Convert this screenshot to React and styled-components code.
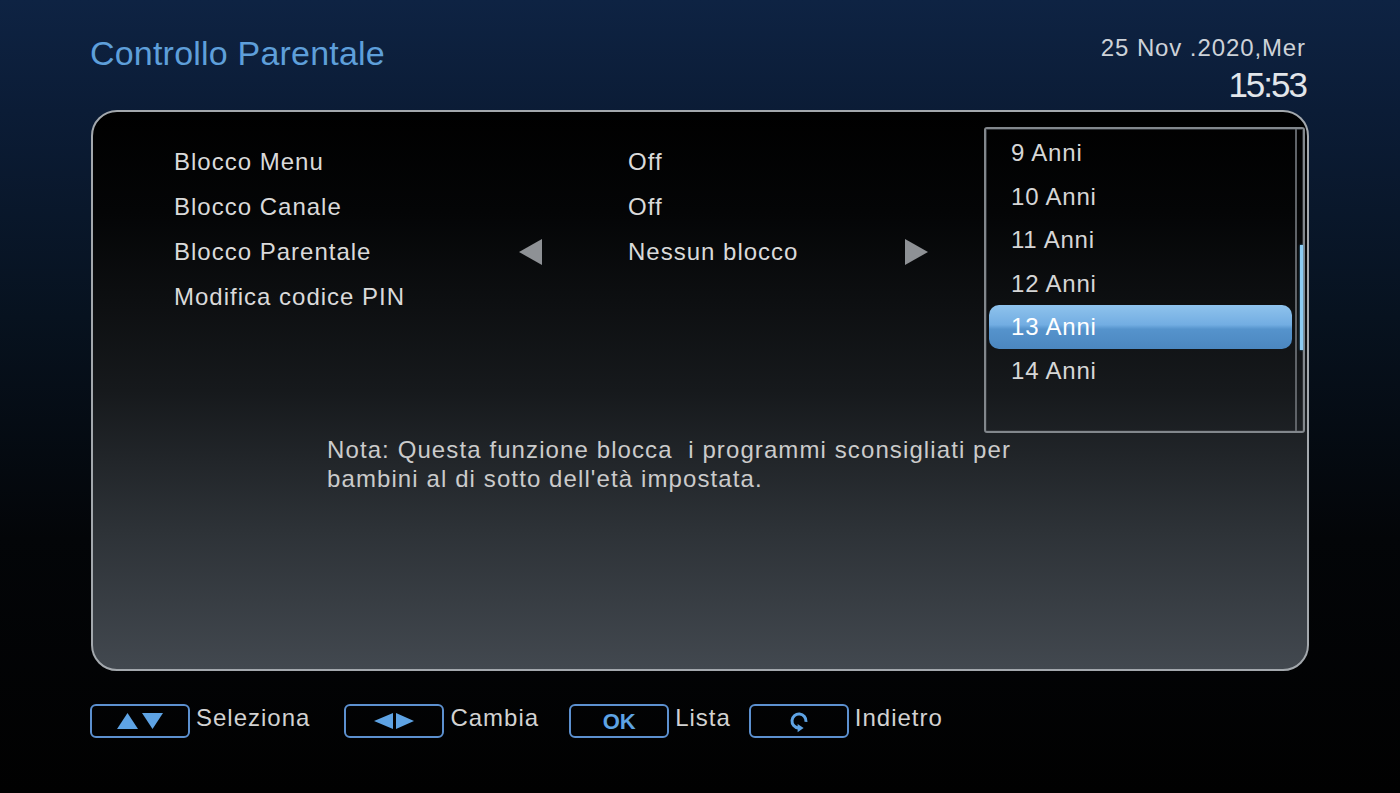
import React from "react";
import styled, { createGlobalStyle } from "styled-components";

const GlobalStyle = createGlobalStyle`
  html, body {
    margin: 0;
    padding: 0;
    background: #000;
  }
  body {
    font-family: "Liberation Sans", Arial, sans-serif;
  }
`;

const settings = [
  { label: "Blocco Menu", value: "Off" },
  { label: "Blocco Canale", value: "Off" },
  { label: "Blocco Parentale", value: "Nessun blocco", arrows: true },
  { label: "Modifica codice PIN", value: "" },
];

const ages = [9, 10, 11, 12, 13, 14];
const selectedAge = 13;

const UpDownIcon = () => (
  <svg width="48" height="18" viewBox="0 0 48 18">
    <polygon points="1,17 11.5,1 22,17" fill="#5ea3e4" />
    <polygon points="26,1 47,1 36.5,17" fill="#5ea3e4" />
  </svg>
);

const LeftRightIcon = () => (
  <svg width="42" height="18" viewBox="0 0 42 18">
    <polygon points="20,1 20,17 1,9" fill="#5ea3e4" />
    <polygon points="23,1 23,17 41,9" fill="#5ea3e4" />
  </svg>
);

const BackIcon = () => (
  <BackSvg width="24" height="26" viewBox="0 0 24 26">
    <circle
      cx="12"
      cy="12"
      r="7"
      fill="none"
      stroke="#5ea3e4"
      strokeWidth="3"
      strokeDasharray="33 11"
      transform="rotate(95 12 12)"
    />
    <polygon points="10.6,15 10.6,23.2 16.6,19" fill="#5ea3e4" />
  </BackSvg>
);

const OkText = ({ children }) => <OkLabel>{children}</OkLabel>;

const hints = [
  { key: "sel", icon: <UpDownIcon />, label: "Seleziona", space: 34 },
  { key: "chg", icon: <LeftRightIcon />, label: "Cambia", space: 30 },
  { key: "ok", icon: <OkText>OK</OkText>, label: "Lista", space: 18 },
  { key: "back", icon: <BackIcon />, label: "Indietro", space: 0 },
];

const App = () => {
  return (
    <>
      <GlobalStyle />
      <Screen>
        <Header>
          <Title>Controllo Parentale</Title>
          <Clock>
            <DateLine>25 Nov .2020,Mer</DateLine>
            <TimeLine>15:53</TimeLine>
          </Clock>
        </Header>

        <Panel>
          <Settings>
            {settings.map((s) => (
              <Row key={s.label}>
                <Label>{s.label}</Label>
                <ArrowCell>{s.arrows && <Arrow dir="left" />}</ArrowCell>
                <Value>{s.value}</Value>
                <ArrowCell>{s.arrows && <Arrow dir="right" />}</ArrowCell>
              </Row>
            ))}
          </Settings>

          <ListBox>
            <Items>
              {ages.map((a) => (
                <Item key={a} $active={a === selectedAge}>
                  {a} Anni
                </Item>
              ))}
            </Items>
            <Track>
              <Thumb />
            </Track>
          </ListBox>

          <Note>
            Nota: Questa funzione blocca&nbsp; i programmi sconsigliati per
            <br />
            bambini al di sotto dell'età impostata.
          </Note>
        </Panel>

        <Footer>
          {hints.map((h) => (
            <Hint key={h.key} $space={h.space}>
              <KeyBox>{h.icon}</KeyBox>
              <HintLabel>{h.label}</HintLabel>
            </Hint>
          ))}
        </Footer>
      </Screen>
    </>
  );
};

const Screen = styled.div`
  width: 1400px;
  height: 793px;
  overflow: hidden;
  display: flex;
  flex-direction: column;
  background: linear-gradient(
    180deg,
    #0e2343 0%,
    #0b1c36 14%,
    #07121f 40%,
    #030508 68%,
    #010101 100%
  );
  font-family: "Liberation Sans", Arial, sans-serif;
`;

const Header = styled.div`
  height: 110px;
  box-sizing: border-box;
  padding: 33px 94px 0 90px;
  display: flex;
  justify-content: space-between;
  align-items: flex-start;
`;

const Title = styled.div`
  font-size: 34px;
  line-height: 40px;
  letter-spacing: 0.2px;
  color: #5e9fda;
`;

const Clock = styled.div`
  margin-top: 1px;
  display: flex;
  flex-direction: column;
  align-items: flex-end;
  color: #cdd2d8;
`;

const DateLine = styled.div`
  font-size: 24px;
  line-height: 28px;
  letter-spacing: 0.9px;
`;

const TimeLine = styled.div`
  margin-top: 5px;
  font-size: 35px;
  line-height: 36px;
  letter-spacing: -2px;
  color: #e2e6ea;
`;

const Panel = styled.div`
  margin: 0 91px;
  height: 561px;
  box-sizing: border-box;
  border: 2px solid #a3a8ad;
  border-radius: 26px;
  background: linear-gradient(
    180deg,
    #000000 0%,
    #040506 18%,
    #16191c 50%,
    #2d3237 75%,
    #42484f 100%
  );
  display: grid;
  grid-template-columns: 1fr 321px;
  grid-template-rows: auto 1fr;
  padding: 15px 2px 0 81px;
`;

const Settings = styled.div`
  padding-top: 12px;
`;

const Row = styled.div`
  height: 45px;
  display: grid;
  grid-template-columns: 345px 109px 277px 24px;
  align-items: center;
  font-size: 24px;
  line-height: 45px;
  letter-spacing: 1px;
  color: #dadada;
`;

const Label = styled.div`
  white-space: nowrap;
`;

const Value = styled.div`
  white-space: nowrap;
`;

const ArrowCell = styled.div`
  display: flex;
  align-items: center;
`;

const Arrow = styled.div`
  width: 0;
  height: 0;
  border-top: 13px solid transparent;
  border-bottom: 13px solid transparent;
  ${(p) =>
    p.dir === "left"
      ? "border-right: 23px solid #8e9195;"
      : "border-left: 23px solid #8e9195;"}
`;

const ListBox = styled.div`
  height: 306px;
  box-sizing: border-box;
  border: 2px solid #82878c;
  border-radius: 3px;
  box-shadow: inset 0 0 0 1px #2e3135;
  display: flex;
`;

const Items = styled.div`
  flex: 1;
  padding: 2px 3px 0 3px;
`;

const Item = styled.div`
  height: 43.5px;
  line-height: 43.5px;
  padding-left: 22px;
  font-size: 24px;
  letter-spacing: 0.8px;
  border-radius: 10px;
  color: ${(p) => (p.$active ? "#ffffff" : "#d6d6d6")};
  background: ${(p) =>
    p.$active
      ? "linear-gradient(180deg, #8fc3ed 0%, #72ade2 45%, #5593cc 55%, #4b87c0 100%)"
      : "transparent"};
`;

const Track = styled.div`
  width: 6px;
  border-left: 2px solid #5f6368;
  display: flex;
  flex-direction: column;
`;

const Thumb = styled.div`
  margin: 116px 0 0 3px;
  width: 3px;
  height: 105px;
  background: #8ccdf4;
  box-shadow: 0 0 2px #4ea6e0;
`;

const Note = styled.div`
  grid-column: 1 / -1;
  margin-top: 2px;
  padding-left: 153px;
  font-size: 24px;
  line-height: 29px;
  letter-spacing: 1.1px;
  color: #cbcbcb;
  white-space: nowrap;
`;

const Footer = styled.div`
  margin-top: 33px;
  padding-left: 90px;
  display: flex;
  align-items: flex-start;
`;

const Hint = styled.div`
  display: flex;
  align-items: flex-start;
  margin-right: ${(p) => p.$space}px;
`;

const KeyBox = styled.div`
  width: 100px;
  height: 34px;
  box-sizing: border-box;
  border: 2px solid #5c90cf;
  border-radius: 6px;
  display: flex;
  align-items: center;
  justify-content: center;
`;

const BackSvg = styled.svg`
  flex-shrink: 0;
  margin-top: 2px;
`;

const OkLabel = styled.span`
  font-size: 22px;
  font-weight: 700;
  color: #5ea3e4;
  margin-top: 1px;
`;

const HintLabel = styled.div`
  margin-left: 6px;
  font-size: 24px;
  line-height: 27px;
  letter-spacing: 1px;
  color: #d2d2d2;
  white-space: nowrap;
`;

export default App;
